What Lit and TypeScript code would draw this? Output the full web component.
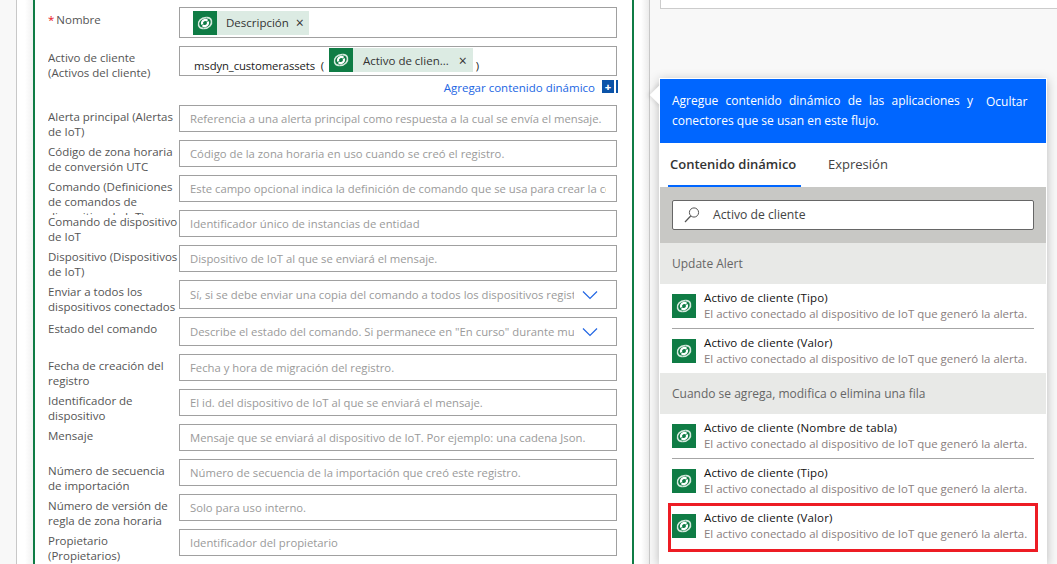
import { LitElement, html, css, svg } from 'lit';
import { customElement } from 'lit/decorators.js';

const logo = svg`<svg class="logo" viewBox="0 0 24 24" width="24" height="24">
  <rect width="24" height="24" fill="#0f7c45"></rect>
  <g transform="rotate(-20 12 12)" fill="none">
    <path d="M15 7.2C10 5.6 5.6 8 5.2 12c-.2 2.2 1.4 4 3.8 4.6" stroke="#d5e8dd" stroke-width="1.6"></path>
    <path d="M9 16.8c5 1.6 9.4-.8 9.8-4.8.2-2.2-1.4-4-3.8-4.6" stroke="#d5e8dd" stroke-width="1.6"></path>
    <path d="M9 12.5c-.3-2 1.3-3.6 3.3-3.5 1.3 0 2.3.7 2.7 1.7" stroke="#ffffff" stroke-width="2.2"></path>
    <path d="M15 11.5c.3 2-1.3 3.6-3.3 3.5-1.3 0-2.3-.7-2.7-1.7" stroke="#ffffff" stroke-width="2.2"></path>
  </g>
</svg>`;

interface Field { label: string; hint: string; select?: boolean; }

const fields: Field[] = [
  { label: 'Alerta principal (Alertas de IoT)', hint: 'Referencia a una alerta principal como respuesta a la cual se envía el mensaje.' },
  { label: 'Código de zona horaria de conversión UTC', hint: 'Código de la zona horaria en uso cuando se creó el registro.' },
  { label: 'Comando (Definiciones de comandos de dispositivo de IoT)', hint: 'Este campo opcional indica la definición de comando que se usa para crear la comunicación.' },
  { label: 'Comando de dispositivo de IoT', hint: 'Identificador único de instancias de entidad' },
  { label: 'Dispositivo (Dispositivos de IoT)', hint: 'Dispositivo de IoT al que se enviará el mensaje.' },
  { label: 'Enviar a todos los dispositivos conectados', hint: 'Sí, si se debe enviar una copia del comando a todos los dispositivos registrados.', select: true },
  { label: 'Estado del comando', hint: 'Describe el estado del comando. Si permanece en "En curso" durante mucho tiempo.', select: true },
  { label: 'Fecha de creación del registro', hint: 'Fecha y hora de migración del registro.' },
  { label: 'Identificador de dispositivo', hint: 'El id. del dispositivo de IoT al que se enviará el mensaje.' },
  { label: 'Mensaje', hint: 'Mensaje que se enviará al dispositivo de IoT. Por ejemplo: una cadena Json.' },
  { label: 'Número de secuencia de importación', hint: 'Número de secuencia de la importación que creó este registro.' },
  { label: 'Número de versión de regla de zona horaria', hint: 'Solo para uso interno.' },
  { label: 'Propietario (Propietarios)', hint: 'Identificador del propietario' },
];

const groups = [
  { title: 'Update Alert', items: ['Activo de cliente (Tipo)', 'Activo de cliente (Valor)'] },
  { title: 'Cuando se agrega, modifica o elimina una fila', items: ['Activo de cliente (Nombre de tabla)', 'Activo de cliente (Tipo)', 'Activo de cliente (Valor)'] },
];

const desc = 'El activo conectado al dispositivo de IoT que generó la alerta.';

@customElement('app-root')
export class AppRoot extends LitElement {
  static styles = css`
    :host {
      display: block;
      height: 564px;
      overflow: hidden;
      background: #f8f8f8;
      font-family: "Open Sans", "Liberation Sans", sans-serif;
      font-size: 11.5px;
      color: #333;
    }
    .page {
      display: flex;
      height: 564px;
      overflow: hidden;
    }
    .gutter {
      width: 16px;
      flex: none;
    }
    .canvas {
      width: 634px;
      flex: none;
      box-sizing: border-box;
      padding-left: 16px;
      background: linear-gradient(to right, #fff 0, #fff 8px, #f1f1f1 16px, #fff 618px, #fff 624px, #e9e9e9 633px);
      border-left: 1px solid #c8c8c8;
      border-right: 1px solid #c8c8c8;
      height: 564px;
    }
    .card {
      width: 601px;
      height: 564px;
      box-sizing: border-box;
      background: #fff;
      border-left: 2px solid #0f7c45;
      border-right: 2px solid #0f7c45;
      padding: 7px 15px 0 13px;
      display: flex;
      flex-direction: column;
      gap: 8px;
    }
    .row {
      display: flex;
      height: 27px;
      flex: none;
    }
    .row.tall { height: 31px; }
    .row.sel { height: 29px; }
    .row.short { height: 30px; }
    .label {
      width: 131px;
      flex: none;
      align-self: flex-start;
      line-height: 15px;
      padding-top: 4px;
      max-height: 36px;
      overflow: hidden;
      color: #555;
    }
    .row.tall .label { padding-top: 5px; }
    .req { color: #e81123; margin-right: 2px; }
    .input {
      flex: 1;
      min-width: 0;
      box-sizing: border-box;
      border: 1px solid #a0a0a0;
      display: flex;
      align-items: center;
      padding: 0 10px;
      font-size: 11.3px;
      color: #9a9a9a;
      white-space: nowrap;
      overflow: hidden;
    }
    .hint {
      overflow: hidden;
      flex: 1;
      min-width: 0;
    }
    .sel .hint { flex: none; width: 384px; }
    .chev {
      margin-left: 8px;
      flex: none;
    }
    .chip {
      display: inline-flex;
      align-items: center;
      height: 24px;
      font-size: 11.5px;
      background: #dcebe3;
      color: #333;
      flex: none;
      padding-right: 5px;
    }
    .chip span { margin-left: 9px; }
    .chip i {
      font-style: normal;
      font-size: 14px;
      margin-left: 7px;
    }
    .chip.wide { padding-right: 6px; }
    .chip.wide span { margin-left: 10px; }
    .chip.wide i { margin-left: 10px; }
    .name { padding-left: 13px; }
    .expr {
      padding-left: 14px;
      color: #222;
      align-items: flex-start;
      padding-top: 1px;
    }
    .expr .txt { margin-top: 10px; line-height: 16px; }
    .expr .code { letter-spacing: -0.1px; }
    .expr .chip { margin: 0 3px 0 5px; }
    .link-row {
      display: flex;
      justify-content: flex-end;
      align-items: center;
      height: 21px;
      margin: -8px -1px 0 0;
      color: #2266e3;
      flex: none;
    }
    .link-row span { margin-top: 2px; }
    .plus {
      margin-left: 7px;
      width: 16px;
      height: 13px;
      display: flex;
      background: linear-gradient(to right, #0b53a8 12px, #fff 12px, #fff 14px, #0b53a8 14px);
      color: #fff;
      font-weight: 700;
      font-size: 11px;
      line-height: 13px;
    }
    .plus b { width: 12px; text-align: center; }
    .side {
      flex: 1;
      position: relative;
      min-width: 0;
    }
    .topbox {
      height: 8px;
      margin-left: 10px;
      background: #fff;
      border: 1px solid #ccc;
      border-top: 0;
      border-right: 0;
    }
    .panel {
      position: absolute;
      left: 9px;
      top: 78px;
      width: 388px;
      height: 486px;
      box-sizing: border-box;
      background: #fff;
      border: 1px solid #fff;
      border-bottom: 0;
      box-shadow: 0 2px 10px rgba(0, 0, 0, 0.25);
    }
    .arrow {
      position: absolute;
      left: -7px;
      top: 8px;
      width: 16px;
      height: 16px;
      background: #fff;
      transform: rotate(45deg);
      box-shadow: -2px 2px 4px rgba(0, 0, 0, 0.08);
    }
    .banner {
      position: relative;
      height: 64px;
      box-sizing: border-box;
      background: #0066ff;
      color: #fff;
      display: flex;
      padding: 12px 12px 0 12px;
      line-height: 20px;
      font-size: 12px;
    }
    .banner p { margin: 0; width: 301px; text-align: justify; }
    .banner span { margin: 1px 0 0 13px; }
    .tabs {
      display: flex;
      height: 44px;
      padding-left: 8px;
      font-size: 13px;
    }
    .tab {
      box-sizing: border-box;
      padding: 6px 2px 0 2px;
      line-height: 30px;
      height: 44px;
      color: #444;
    }
    .tab.on {
      width: 133px;
      font-weight: 600;
      color: #333;
      border-bottom: 2px solid #0066ff;
      margin-right: 25px;
    }
    .search {
      height: 56px;
      box-sizing: border-box;
      background: #c8c8c5;
      padding: 13px 12px;
    }
    .box {
      height: 30px;
      box-sizing: border-box;
      background: #fff;
      border: 1px solid #666;
      border-radius: 2px;
      display: flex;
      align-items: center;
      padding: 0 0 1px 11px;
      font-size: 12.2px;
      color: #444;
    }
    .box svg { margin-right: 13px; }
    .group {
      height: 41px;
      box-sizing: border-box;
      background: #e8e9e7;
      color: #666;
      padding: 0 12px;
      display: flex;
      align-items: center;
      font-size: 12px;
    }
    .item {
      height: 45px;
      box-sizing: border-box;
      margin: 0 12px;
      display: flex;
      align-items: flex-start;
      padding-top: 10px;
      border-bottom: 1px solid #a6a6a6;
      position: relative;
    }
    .item:last-child { border-bottom: 0; height: 44px; }
    .logo { flex: none; display: block; }
    .meta { margin-left: 8px; line-height: 16px; margin-top: -4px; white-space: nowrap; }
    .meta b { display: block; font-weight: 500; color: #111; letter-spacing: 0.15px; }
    .meta small { display: block; font-size: 11.45px; color: #8a8080; }
    .mark {
      position: absolute;
      left: -4px;
      right: -4px;
      top: -1px;
      bottom: -4px;
      border: 3px solid #ed1c24;
    }
  `;

  renderField(f: Field) {
    const cls = f.select ? 'row sel' : 'row';
    return html`<div class=${cls}>
      <div class="label">${f.label}</div>
      <div class="input">
        <span class="hint">${f.hint}</span>
        ${f.select ? html`<svg class="chev" width="16" height="10" viewBox="0 0 16 10"><path d="M1 1.5l7 7 7-7" fill="none" stroke="#2266e3" stroke-width="1.2"></path></svg>` : ''}
      </div>
    </div>`;
  }

  render() {
    return html`<div class="page">
      <div class="gutter"></div>
      <div class="canvas">
        <div class="card">
          <div class="row tall">
            <div class="label"><span class="req">*</span>Nombre</div>
            <div class="input name">
              <div class="chip">${logo}<span>Descripción</span><i>×</i></div>
            </div>
          </div>
          <div class="row short">
            <div class="label">Activo de cliente (Activos del cliente)</div>
            <div class="input expr">
              <span class="txt code">msdyn_customerassets &nbsp;(</span>
              <div class="chip wide">${logo}<span>Activo de clien...</span><i>×</i></div>
              <span class="txt">)</span>
            </div>
          </div>
          <div class="link-row"><span>Agregar contenido dinámico</span><div class="plus"><b>+</b></div></div>
          ${fields.map((f) => this.renderField(f))}
        </div>
      </div>
      <div class="side">
        <div class="topbox"></div>
        <div class="panel">
          <div class="arrow"></div>
          <div class="banner">
            <p>Agregue contenido dinámico de las aplicaciones y conectores que se usan en este flujo.</p>
            <span>Ocultar</span>
          </div>
          <div class="tabs">
            <div class="tab on">Contenido dinámico</div>
            <div class="tab">Expresión</div>
          </div>
          <div class="search">
            <div class="box">
              <svg width="16" height="16" viewBox="0 0 16 16"><circle cx="10" cy="5.5" r="4.6" fill="none" stroke="#555" stroke-width="1"></circle><path d="M6.7 9L1 15" stroke="#555" stroke-width="1.2"></path></svg>
              Activo de cliente
            </div>
          </div>
          ${groups.map((g, gi) => html`
            <div class="group">${g.title}</div>
            <div>
              ${g.items.map((it, ii) => html`<div class="item">
                ${logo}
                <div class="meta"><b>${it}</b><small>${desc}</small></div>
                ${gi === 1 && ii === 2 ? html`<div class="mark"></div>` : ''}
              </div>`)}
            </div>
          `)}
        </div>
      </div>
    </div>`;
  }
}
